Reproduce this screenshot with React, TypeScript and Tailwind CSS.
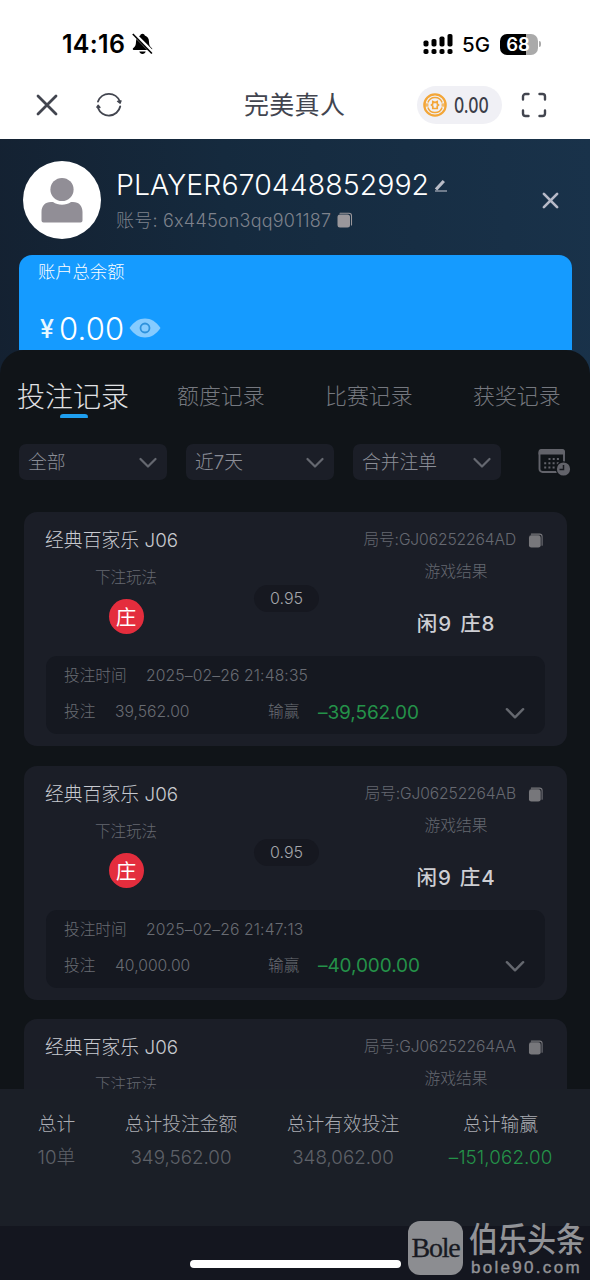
import React from "react";

const SANS = "font-['Inter','Noto_Sans_CJK_SC',sans-serif]";

function CopyIcon({ className }: { className: string }) {
  return (
    <svg viewBox="0 0 16 16" className={className}>
      <rect x="0.5" y="2.500" width="12.5" height="13" rx="2.5" fill="currentColor" />
      <path d="M3 1.200h9a2.500 2.500 0 0 1 2.500 2.500V13" fill="none" stroke="currentColor" strokeWidth="1.100" strokeLinecap="round" />
    </svg>
  );
}

function Chevron({ className }: { className: string }) {
  return (
    <svg viewBox="0 0 18 12" className={className}>
      <path d="M1.5 2 9 9.5 16.5 2" fill="none" stroke="currentColor" strokeWidth="2.200" strokeLinecap="round" strokeLinejoin="round" />
    </svg>
  );
}

function StatusBar() {
  return (
    <div className="flex h-[70px] items-center pt-[18px] pl-[62px] text-black">
      <span className="w-[70px] text-[25px] leading-[26px] font-semibold tracking-[0.300px]">14:16</span>
      <svg viewBox="0 0 22 22" className="h-[22px] w-[22px]">
        <path d="M10.500 0.800c-1.200 0-2 .7-2.300 1.700C5.500 3.400 4 5.700 4 8.700c0 3.600-.9 5-2.900 6.500-.7.600-.4 1.700.6 1.700h17.600c1 0 1.300-1.100.6-1.700C18 13.700 17 12.300 17 8.700c0-3-1.500-5.300-4.200-6.200C12.500 1.500 11.700.8 10.500.8ZM7.300 18.500h6.400c-.4 1.500-1.600 2.400-3.200 2.400s-2.800-.9-3.200-2.400Z" fill="currentColor" />
        <path d="M1.500 0.300 20.800 19.800" stroke="white" strokeWidth="3.800" />
        <path d="M0.800 1 19.900 20.500" stroke="currentColor" strokeWidth="1.600" />
      </svg>
      <svg viewBox="0 0 30 20" className="ml-[269px] h-[20px] w-[30px]" fill="currentColor">
        <rect x="0.500" y="6.500" width="5" height="6" rx="1.800" />
        <rect x="8.500" y="5" width="5" height="7.500" rx="1.800" />
        <rect x="16.500" y="2.500" width="5" height="10" rx="1.800" />
        <rect x="24.500" y="0" width="5" height="12.500" rx="1.800" />
        <rect x="0.500" y="15" width="5" height="5" rx="1.800" />
        <rect x="8.500" y="15" width="5" height="5" rx="1.800" />
        <rect x="16.500" y="15" width="5" height="5" rx="1.800" />
        <rect x="24.500" y="15" width="5" height="5" rx="1.800" />
      </svg>
      <span className="ml-[9px] w-[38px] pt-[2px] text-[20.500px] leading-[22px] font-medium">5G</span>
      <div className="flex h-[21px] w-[38px] items-center justify-center rounded-[7px] bg-[linear-gradient(90deg,#000_68%,#aaa_68%)] pr-[2px] text-[18.500px] leading-[20px] font-semibold text-white">
        68
      </div>
      <div className="ml-[1px] h-[6px] w-[2px] rounded-r-full bg-[#aaa]" />
    </div>
  );
}

function NavBar() {
  return (
    <div className="flex h-[69px] items-center pl-[36px] text-[#42454f]">
      <svg viewBox="0 0 22 22" className="h-[22px] w-[22px]">
        <path d="M2 2 20 20M20 2 2 20" stroke="currentColor" strokeWidth="2.800" strokeLinecap="round" />
      </svg>
      <svg viewBox="0 0 28 28" className="ml-[37px] h-[28px] w-[28px]" fill="none">
        <path d="M3 10.500A11.600 11.600 0 0 1 24.800 10.500M25.200 15.500A11.600 11.600 0 0 1 3 17" stroke="currentColor" strokeWidth="1.900" strokeLinecap="round" />
        <path d="m22.500 10.300 3.600-.5-1 2.500ZM1.800 16.200l1.400-2 1.800 2.300Z" fill="currentColor" stroke="currentColor" strokeWidth="1.300" strokeLinejoin="round" />
      </svg>
      <div className="ml-[121px] w-[173px] text-[25px] leading-[30px] tracking-[0.300px] whitespace-nowrap">完美真人</div>
      <div className="flex h-[38px] w-[85px] items-center rounded-full bg-[#f0f0f5] pl-[6px]">
        <svg viewBox="0 0 24 24" className="h-[24px] w-[24px]" fill="none" stroke="#f3a638">
          <circle cx="12" cy="12" r="10.700" strokeWidth="2.200" />
          <path d="M4.900 9.500a7.500 7.500 0 0 1 14.200 0M4.900 14.500a7.500 7.500 0 0 0 14.200 0" strokeWidth="1.500" />
          <path d="M1 11.200h4.500M18.500 11.200H23M1 12.800h4.500M18.500 12.800H23" strokeWidth="1.300" />
          <path d="M9.800 8.500 12 9.500l2.200-1v2.300l1.300 1.200-1.300 1.200v2.300H9.800v-2.300L8.500 12l1.300-1.200Z" strokeWidth="1.700" />
        </svg>
        <span className="ml-[7px] inline-block origin-left scale-x-[0.740] pt-px text-[21.500px] leading-[24px] font-medium text-[#3b3d48]">0.00</span>
      </div>
      <svg viewBox="0 0 26 26" className="ml-[19px] h-[26px] w-[26px]" fill="none" stroke="currentColor" strokeWidth="2.400" strokeLinecap="round">
        <path d="M2 7.500V4.500A2.500 2.500 0 0 1 4.500 2H7.500M18.500 2h3A2.500 2.500 0 0 1 24 4.500V7.500M24 18.500v3a2.500 2.500 0 0 1-2.500 2.500H18.500M7.500 24H4.500A2.500 2.500 0 0 1 2 21.500V18.500" />
      </svg>
    </div>
  );
}

function Profile() {
  return (
    <div className="flex h-[116px] pl-[23px]">
      <svg viewBox="0 0 78 78" className="mt-[22px] h-[78px] w-[78px]">
        <circle cx="39" cy="39" r="39" fill="#fff" />
        <circle cx="39" cy="28.500" r="11.600" fill="#918e96" />
        <path d="M18.500 51c0-6 3.500-10 9.500-10h2c5 3.500 13 3.500 18 0h2c6 0 9.500 4 9.500 10v8.500a2 2 0 0 1-2 2h-37a2 2 0 0 1-2-2Z" fill="#918e96" />
      </svg>
      <div className="ml-[15px] w-[424px] pt-[30px] whitespace-nowrap">
        <div className="flex h-[32px] items-center">
          <span className="w-[318px] text-[28.500px] leading-[32px] font-light tracking-[0.050px] text-white">PLAYER670448852992</span>
          <svg viewBox="0 0 14 13" className="h-[13px] w-[14px] text-[#b9bcc7]">
            <path d="M2 10.500 9.800 2" stroke="currentColor" strokeWidth="3.200" />
            <path d="M1 12h12" stroke="currentColor" strokeWidth="1.100" />
          </svg>
        </div>
        <div className="flex h-[38px] items-center text-[#7e828c]">
          <span className="w-[221px] pt-px text-[18px] leading-[24px] font-light tracking-[0.220px]">账号: 6x445on3qq901187</span>
          <CopyIcon className="h-[16px] w-[16px] text-[#9a979b]" />
        </div>
      </div>
      <svg viewBox="0 0 18 18" className="mt-[53px] ml-[2px] h-[17px] w-[17px] text-[#b7bac8]">
        <path d="M2 2 16 16M16 2 2 16" stroke="currentColor" strokeWidth="2.800" strokeLinecap="round" />
      </svg>
    </div>
  );
}

function Balance() {
  return (
    <div className="mx-[19px] h-[95px] w-[553px] rounded-t-[13px] bg-[#159bff] pl-[19px] text-[#e9f8ff]">
      <div className="h-[32px] pt-px text-[17.300px] leading-[32px] font-light text-white">账户总余额</div>
      <div className="flex h-[84px] items-center">
        <span className="w-[21px] pl-[2px] text-[25px] leading-[30px] font-medium">¥</span>
        <span className="w-[70px] text-[31px] leading-[30px] font-light tracking-[0.200px] text-white">0.00</span>
        <svg viewBox="0 0 32 20" className="-mt-[2px] h-[20px] w-[32px]">
          <path d="M.5 10C5 3.500 10 .5 16 .5S27 3.500 31.500 10C27 16.500 22 19.500 16 19.500S5 16.500.5 10Z" fill="#86cbff" />
          <circle cx="16" cy="10" r="4.500" fill="none" stroke="#2e92dd" strokeWidth="1.800" />
        </svg>
      </div>
    </div>
  );
}

function Tabs() {
  return (
    <div className="flex h-[94px] pt-[28px] pl-[17px] whitespace-nowrap">
      <div className="flex w-[160px] flex-col">
        <span className="h-[36px] pt-px text-[28px] leading-[36px] font-light text-[#e0e1e4]">投注记录</span>
        <span className="ml-[43px] h-[4px] w-[28px] rounded-t-[4px] rounded-b-[1px] bg-[#1e9ff0]" />
      </div>
      <div className="flex text-[21.900px] leading-[37px] font-light text-[#75787f]">
        <span className="w-[148px]">额度记录</span>
        <span className="w-[148px]">比赛记录</span>
        <span>获奖记录</span>
      </div>
    </div>
  );
}

function Filters() {
  return (
    <div className="flex h-[68px] items-start pl-[19px]">
      <div className="flex gap-[19px]">
        {["全部", "近7天", "合并注单"].map((label) => (
          <div key={label} className="flex h-[36px] w-[148px] items-center justify-between rounded-[7px] bg-[#1b1e27] pr-[10px] pl-[9px] text-[18.800px] font-light text-[#8a8d96]">
            <span className="pt-[3px]">{label}</span>
            <Chevron className="mt-[2px] h-[12px] w-[18px] text-[#656870]" />
          </div>
        ))}
      </div>
      <svg viewBox="0 0 34 28" className="mt-[4px] ml-[36px] h-[28px] w-[34px] text-[#62636a]">
        <rect x="2.500" y="2" width="24.500" height="22" rx="3" fill="none" stroke="currentColor" strokeWidth="1.900" />
        <path d="M1.500 6.500V4a3 3 0 0 1 3-3h20.500a3 3 0 0 1 3 3v2.500Z" fill="currentColor" />
        <path d="M11.500 11h12.500M7.200 15.200h16.800M7.200 19.400h12.500" stroke="currentColor" strokeWidth="2" strokeDasharray="2 2.200" />
        <circle cx="26.500" cy="21" r="7.800" fill="#101418" />
        <circle cx="26.500" cy="21" r="6.600" fill="currentColor" />
        <path d="M26.500 17v4.500h-4" fill="none" stroke="#17191f" strokeWidth="1.500" />
      </svg>
    </div>
  );
}

type Bet = { id: string; result: string; time: string; stake: string; win: string };

function BetCard({ bet }: { bet: Bet }) {
  return (
    <div className="h-[234px] shrink-0 rounded-[13px] bg-[#1b1e27] px-[22px] whitespace-nowrap">
      <CardHeader id={bet.id} />
      <div className="flex h-[99px] text-[#666971]">
        <div className="flex w-[160px] flex-col items-center">
          <span className="h-[42px] pt-[9px] text-[15.500px] leading-[24px] font-light">下注玩法</span>
          <span className="flex h-[35px] w-[35px] items-center justify-center rounded-full bg-[#e42d3d] pt-[2px] text-[20.500px] leading-[33px] font-normal text-white">庄</span>
        </div>
        <div className="flex w-[161px] justify-center pt-[28px]">
          <span className="h-[27px] w-[65px] rounded-full bg-[#161820] text-center text-[16px] leading-[27px] font-light text-[#a4a6ab]">0.95</span>
        </div>
        <div className="flex w-[178px] flex-col items-center">
          <span className="h-[50px] pt-[3px] text-[15.800px] leading-[24px] font-light">游戏结果</span>
          <span className="pt-px text-[20.500px] leading-[32px] font-medium tracking-[0.800px] text-[#cecfd4] [word-spacing:2px]">{bet.result}</span>
        </div>
      </div>
      <div className="h-[78px] rounded-[11px] bg-[#151820] pl-[18px] text-[15.700px] font-light text-[#696c73]">
        <div className="flex h-[40px] items-center">
          <span className="w-[82px]">投注时间</span>
          <span className="tracking-[0.120px]">{bet.time}</span>
        </div>
        <div className="flex h-[32px] items-center">
          <span className="w-[51px]">投注</span>
          <span className="w-[153px]">{bet.stake}</span>
          <span className="w-[50px]">输赢</span>
          <span className="w-[187px] pt-[2px] text-[19px] font-normal tracking-[-0.080px] text-[#249249]">{bet.win}</span>
          <Chevron className="mt-[2px] h-[13px] w-[20px] text-[#65686f]" />
        </div>
      </div>
    </div>
  );
}

function CardHeader({ id }: { id: string }) {
  return (
    <div className="flex h-[45px] items-start justify-between">
      <span className="-ml-px pt-[17px] text-[18.800px] leading-[24px] font-light tracking-[0.050px] text-[#c8cad0]">经典百家乐 J06</span>
      <div className="flex items-start gap-[12px] pr-[1px] pt-[15px] text-[15.600px] leading-[24px] font-light text-[#666971]">
        <span className="pt-px tracking-[-0.100px]">局号:{id}</span>
        <CopyIcon className="mt-[6px] h-[15px] w-[16px] text-[#77777b]" />
      </div>
    </div>
  );
}

function CardPeek({ id }: { id: string }) {
  return (
    <div className="h-[70px] shrink-0 rounded-t-[13px] bg-[#1b1e27] px-[22px] whitespace-nowrap">
      <CardHeader id={id} />
      <div className="flex h-[25px] justify-between overflow-hidden text-[#666971]">
        <span className="w-[160px] pt-[9px] text-center text-[15.500px] leading-[24px] font-light">下注玩法</span>
        <span className="w-[178px] pt-[3px] text-center text-[15.800px] leading-[23px] font-light">游戏结果</span>
      </div>
    </div>
  );
}

const BETS: Bet[] = [
  { id: "GJ06252264AD", result: "闲9 庄8", time: "2025–02–26 21:48:35", stake: "39,562.00", win: "–39,562.00" },
  { id: "GJ06252264AB", result: "闲9 庄4", time: "2025–02–26 21:47:13", stake: "40,000.00", win: "–40,000.00" },
];

function Totals() {
  return (
    <div className="flex h-[137px] bg-[#1b1f27] pt-[19px] text-center text-[18.800px] leading-[33px] font-light whitespace-nowrap text-[#aaacb2]">
      <div className="ml-[25px] w-[63px]">
        <div>总计</div>
        <div className="text-[#5e6168]">10单</div>
      </div>
      <div className="ml-[12px] w-[162px]">
        <div>总计投注金额</div>
        <div className="text-[#5e6168]">349,562.00</div>
      </div>
      <div className="w-[162px]">
        <div>总计有效投注</div>
        <div className="text-[#5e6168]">348,062.00</div>
      </div>
      <div className="ml-[7px] w-[139px]">
        <div>总计输赢</div>
        <div className="tracking-[0.100px] text-[#249249]">–151,062.00</div>
      </div>
    </div>
  );
}

function Watermark() {
  return (
    <div className="absolute top-[1219px] left-[408px] flex text-[#929397]">
      <div className="mt-[2px] flex h-[54px] w-[55px] items-center justify-center rounded-[12px] bg-[#8c8d91]">
        <span className="inline-block font-['Liberation_Serif',serif] text-[28px] leading-[52px] tracking-[-1.200px] text-[#181a22] [-webkit-text-stroke:0.300px_#181a22]">Bole</span>
      </div>
      <div className="ml-[6px] whitespace-nowrap">
        <div className="h-[38px] w-[118px] text-[29px] leading-[36px]">
          <span className="inline-block origin-top-left scale-y-[1.180] font-medium">伯乐头条</span>
        </div>
        <div className="pl-[2px] font-['Liberation_Sans',sans-serif] text-[17px] leading-[22px] tracking-[2.300px] [-webkit-text-stroke:0.400px_#929397]">bole90.com</div>
      </div>
    </div>
  );
}

export default function App() {
  return (
    <div lang="zh-CN" className={`relative flex h-[1280px] w-[590px] flex-col overflow-hidden bg-white ${SANS}`}>
      <StatusBar />
      <NavBar />
      <div className="flex h-[950px] flex-col bg-[linear-gradient(85deg,#142131_0,#152a3e_40%,#19324a_100%)] bg-[length:590px_260px] bg-no-repeat">
        <Profile />
        <Balance />
        <div className="h-[739px] rounded-t-[24px] bg-[#101418]">
          <Tabs />
          <Filters />
          <div className="mx-[24px] flex w-[543px] flex-col gap-[19.500px]">
            {BETS.map((bet) => (
              <BetCard key={bet.id} bet={bet} />
            ))}
            <CardPeek id="GJ06252264AA" />
          </div>
        </div>
      </div>
      <Totals />
      <div className="flex h-[54px] items-start bg-[#14161f] pt-[34px] pl-[190px]">
        <div className="h-[8px] w-[211px] rounded-full bg-white" />
      </div>
      <Watermark />
    </div>
  );
}
